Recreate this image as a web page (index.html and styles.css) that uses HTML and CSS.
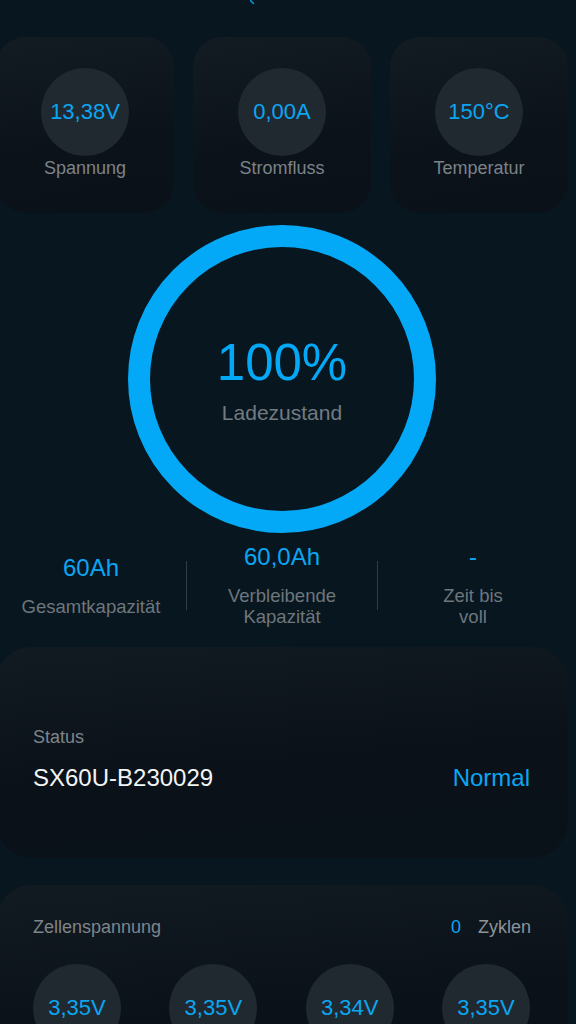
FILE: index.html
```html
<!DOCTYPE html>
<html lang="de">
<head>
    <meta charset="UTF-8">
    <meta name="viewport" content="width=device-width, initial-scale=1.0">
    <title>Batterie</title>
    <link rel="stylesheet" href="styles.css">
</head>
<body>

<div class="page">
    <div class="top-bar">
        <svg class="top-mark" width="6" height="5" viewBox="0 0 6 5">
            <path d="M0 0 L4 4" stroke="#0a8fd0" stroke-width="1.6" fill="none"/>
        </svg>
    </div>

    <div class="metric-row">
        <div class="metric-card">
            <div class="bubble">13,38V</div>
            <div class="metric-label">Spannung</div>
        </div>
        <div class="metric-card">
            <div class="bubble">0,00A</div>
            <div class="metric-label">Stromfluss</div>
        </div>
        <div class="metric-card">
            <div class="bubble">150°C</div>
            <div class="metric-label">Temperatur</div>
        </div>
    </div>

    <div class="ring">
        <div class="ring-value">100%</div>
        <div class="ring-label">Ladezustand</div>
    </div>

    <div class="stats">
        <div class="stat">
            <div class="stat-value">60Ah</div>
            <div class="stat-label">Gesamtkapazität</div>
        </div>
        <div class="divider"></div>
        <div class="stat">
            <div class="stat-value">60,0Ah</div>
            <div class="stat-label">Verbleibende<br>Kapazität</div>
        </div>
        <div class="divider"></div>
        <div class="stat">
            <div class="stat-value">-</div>
            <div class="stat-label">Zeit bis<br>voll</div>
        </div>
    </div>

    <div class="status-card">
        <div class="card-title">Status</div>
        <div class="status-row">
            <span class="serial">SX60U-B230029</span>
            <span class="state">Normal</span>
        </div>
    </div>

    <div class="cells-card">
        <div class="cells-head">
            <span class="card-title">Zellenspannung</span>
            <span class="cycles"><span class="cycles-count">0</span>Zyklen</span>
        </div>
        <div class="cells">
            <div class="bubble">3,35V</div>
            <div class="bubble">3,35V</div>
            <div class="bubble">3,34V</div>
            <div class="bubble">3,35V</div>
        </div>
    </div>
</div>

</body>
</html>
```

FILE: styles.css
```css
* {
    box-sizing: border-box;
    margin: 0;
    padding: 0;
}
html, body {
    height: 100%;
    overflow: hidden;
}
body {
    font-family: 'Liberation Sans', Arial, sans-serif;
    background-color: #08161f;
    color: #7a8288;
}
.page {
    width: 572px;
    margin-left: -4px;
}
.top-bar {
    height: 37px;
    padding-left: 254px;
}
.top-mark {
    display: block;
}
.metric-row {
    display: flex;
    gap: 19px;
}
.metric-card {
    width: 178px;
    height: 176px;
    border-radius: 30px;
    background: linear-gradient(170deg, #141c23 0%, #0b1219 60%, #0a1118 100%);
    display: flex;
    flex-direction: column;
    align-items: center;
    padding-top: 31px;
}
.bubble {
    width: 88px;
    height: 88px;
    border-radius: 50%;
    background-color: #212930;
    color: #0aa6f2;
    font-size: 22px;
    display: flex;
    align-items: center;
    justify-content: center;
}
.metric-label {
    font-size: 18px;
    line-height: 21px;
    margin-top: 2px;
    color: #7b8389;
}
.ring {
    width: 308px;
    height: 308px;
    margin: 12px auto 0;
    border: 22px solid #03a9f6;
    border-radius: 50%;
    display: flex;
    flex-direction: column;
    align-items: center;
    justify-content: center;
}
.ring-value {
    font-size: 51px;
    line-height: 60px;
    color: #03a9f6;
}
.ring-label {
    font-size: 21px;
    line-height: 24px;
    margin-top: 8px;
    color: #737b82;
}
.stats {
    display: flex;
    align-items: center;
    margin-top: 10px;
    height: 84px;
}
.stat {
    flex: 1;
    text-align: center;
}
.stat-value {
    font-size: 24px;
    line-height: 28px;
    color: #0aa6f2;
    margin-bottom: 14px;
}
.stat-label {
    font-size: 18.5px;
    line-height: 21px;
    color: #6e767d;
}
.divider {
    width: 1px;
    height: 49px;
    background-color: #333b42;
}
.status-card {
    margin-top: 20px;
    height: 211px;
    border-radius: 36px;
    background: linear-gradient(175deg, #131b22 0%, #0a1119 55%, #0a1219 100%);
    padding: 80px 38px 0 37px;
}
.card-title {
    font-size: 18px;
    line-height: 21px;
    color: #7d858b;
}
.status-row {
    display: flex;
    justify-content: space-between;
    align-items: center;
    margin-top: 16px;
    height: 28px;
}
.serial {
    font-size: 24px;
    color: #f2f4f5;
}
.state {
    font-size: 24px;
    color: #0aa6f2;
}
.cells-card {
    margin-top: 27px;
    height: 200px;
    border-radius: 36px;
    background: linear-gradient(175deg, #131b22 0%, #0a1119 60%);
    padding: 32px 37px 0 37px;
}
.cells-head {
    display: flex;
    justify-content: space-between;
    align-items: center;
}
.cycles {
    font-size: 18px;
    line-height: 21px;
    color: #8c9399;
}
.cycles-count {
    color: #0aa6f2;
    margin-right: 17px;
}
.cells {
    display: flex;
    justify-content: space-between;
    margin-top: 26px;
    padding-right: 1px;
}
```
